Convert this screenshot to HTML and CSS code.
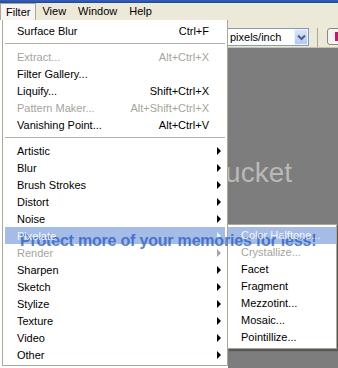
FILE: index.html
```html
<!DOCTYPE html>
<html lang="en">
<head>
    <meta charset="UTF-8">
    <title>Filter menu</title>
    <link rel="stylesheet" href="styles.css">
</head>
<body>

    <div class="janela">
        <div class="titulo"></div>

        <div class="barra">
            <span class="aberto">Filter</span>
            <span>View</span>
            <span>Window</span>
            <span>Help</span>
        </div>

        <div class="area">
            <div class="menu">
                <div class="item"><span>Surface Blur</span><span>Ctrl+F</span><span></span></div>
                <div class="sep"></div>
                <div class="item off"><span>Extract...</span><span>Alt+Ctrl+X</span><span></span></div>
                <div class="item"><span>Filter Gallery...</span><span></span><span></span></div>
                <div class="item"><span>Liquify...</span><span>Shift+Ctrl+X</span><span></span></div>
                <div class="item off"><span>Pattern Maker...</span><span>Alt+Shift+Ctrl+X</span><span></span></div>
                <div class="item"><span>Vanishing Point...</span><span>Alt+Ctrl+V</span><span></span></div>
                <div class="sep"></div>
                <div class="item"><span>Artistic</span><span></span><span class="seta"></span></div>
                <div class="item"><span>Blur</span><span></span><span class="seta"></span></div>
                <div class="item"><span>Brush Strokes</span><span></span><span class="seta"></span></div>
                <div class="item"><span>Distort</span><span></span><span class="seta"></span></div>
                <div class="item"><span>Noise</span><span></span><span class="seta"></span></div>
                <div class="item ativo"><span class="rotulo">Pixelate</span><span></span><span class="seta"></span></div>
                <div class="item off"><span>Render</span><span></span><span class="seta"></span></div>
                <div class="item"><span>Sharpen</span><span></span><span class="seta"></span></div>
                <div class="item"><span>Sketch</span><span></span><span class="seta"></span></div>
                <div class="item"><span>Stylize</span><span></span><span class="seta"></span></div>
                <div class="item"><span>Texture</span><span></span><span class="seta"></span></div>
                <div class="item"><span>Video</span><span></span><span class="seta"></span></div>
                <div class="item"><span>Other</span><span></span><span class="seta"></span></div>
            </div>

            <div class="lado">
                <div class="ferramentas">
                    <div class="combo">
                        <span>pixels/inch</span>
                        <span class="abrir">
                            <svg width="9" height="7" viewBox="0 0 9 7"><path d="M1 1.5 L4.5 5 L8 1.5" fill="none" stroke="#4d6185" stroke-width="2"/></svg>
                        </span>
                    </div>
                    <div class="divisor"></div>
                    <div class="botao"></div>
                </div>
                <div class="tela">
                    <div class="marca">photobucket</div>
                </div>
            </div>
        </div>

        <div class="sub">
            <div class="item ativo"><span class="rotulo">Color Halftone...</span></div>
            <div class="item off">Crystallize...</div>
            <div class="item">Facet</div>
            <div class="item">Fragment</div>
            <div class="item">Mezzotint...</div>
            <div class="item">Mosaic...</div>
            <div class="item">Pointillize...</div>
        </div>

        <div class="aviso">Protect more of your memories for less!</div>
    </div>

</body>
</html>
```

FILE: styles.css
```css
* {
    margin: 0;
    padding: 0;
    box-sizing: border-box;
}

body {
    font-family: "Liberation Sans", Arial, sans-serif;
    font-size: 11px;
    color: #000;
    background: #fff;
}

.janela {
    position: relative;
    width: 338px;
    height: 368px;
    overflow: hidden;
    display: flex;
    flex-direction: column;
}

.titulo {
    height: 3px;
    background: linear-gradient(#3a62b8, #1d47a6);
}

.barra {
    height: 17px;
    background: #ece9d8;
    display: flex;
}

.barra span {
    padding: 0 6px;
    line-height: 17px;
}

.barra .aberto {
    background: #f6f5f0;
    border: 1px solid #aca899;
    border-bottom: none;
    padding: 0 5px;
    line-height: 16px;
}

.area {
    flex: 1;
    display: flex;
    background: #fff;
}

.menu {
    flex-shrink: 0;
    width: 226px;
    margin-left: 2px;
    align-self: flex-start;
    border: 1px solid #aca899;
    border-top: none;
    padding: 2px 0 2px;
    background: #fff;
}

.item {
    display: grid;
    grid-template-columns: 1fr auto 16px;
    align-items: center;
    height: 17px;
    margin: 0 2px;
    padding-left: 12px;
    white-space: nowrap;
}

.sep {
    height: 9px;
    margin: 0 2px;
    display: flex;
    align-items: center;
}

.sep::after {
    content: "";
    flex: 1;
    border-top: 1px solid #b4b1a4;
}

.off {
    color: #a6a49c;
}

.ativo {
    background: #a4bce6;
    color: #f4f7fc;
}

/* the highlighted labels stay readable over the watermark */
.rotulo {
    position: relative;
    z-index: 2;
}

.seta {
    width: 0;
    height: 0;
    margin-left: 8px;
    border-left: 4px solid #000;
    border-top: 4px solid transparent;
    border-bottom: 4px solid transparent;
}

.off .seta {
    border-left-color: #a6a49c;
}

.ativo .seta {
    border-left-color: #eef2fa;
}

.lado {
    flex: 1;
    min-width: 0;
    overflow: hidden;
    display: flex;
    flex-direction: column;
}

.ferramentas {
    height: 28px;
    background: #ece9d8;
    border-bottom: 1px solid #c5c2b2;
    display: flex;
    align-items: flex-start;
    padding-top: 8px;
}

.combo {
    flex-shrink: 0;
    width: 81px;
    height: 18px;
    background: #fff;
    border: 1px solid #7f9db9;
    border-left: none;
    display: flex;
    align-items: center;
    justify-content: space-between;
    padding-left: 2px;
}

.abrir {
    width: 14px;
    height: 16px;
    background: linear-gradient(#dbe5fb, #b3c8f3);
    border: 1px solid #eef3fd;
    display: flex;
    align-items: center;
    justify-content: center;
}

.divisor {
    flex-shrink: 0;
    width: 1px;
    height: 19px;
    margin-left: 8px;
    background: #aca899;
}

.botao {
    flex-shrink: 0;
    position: relative;
    width: 16px;
    height: 17px;
    margin-left: 9px;
    border: 1px solid #8a8a8a;
    border-radius: 3px;
    background: #f4f3ee;
}

.botao::after {
    content: "";
    position: absolute;
    left: 7px;
    top: 3px;
    width: 4px;
    height: 9px;
    background: #c0186a;
}

.tela {
    flex: 1;
    position: relative;
    overflow: hidden;
    background: #7d7d7d;
}

.marca {
    position: absolute;
    right: 46px;
    top: 111px;
    font-size: 28px;
    line-height: 28px;
    color: #b9b9b9;
    white-space: nowrap;
}

.sub {
    position: absolute;
    left: 227px;
    top: 224px;
    width: 110px;
    border: 1px solid #aca899;
    padding: 2px 0;
    background: #fff;
    box-shadow: 2px 2px 1px rgba(0, 0, 0, 0.3);
}

.sub .item {
    display: block;
    line-height: 17px;
    margin: 0;
    padding-left: 13px;
}

.aviso {
    position: absolute;
    left: 20px;
    top: 232px;
    font-size: 16px;
    font-weight: bold;
    line-height: 17px;
    letter-spacing: -0.2px;
    color: rgba(45, 95, 195, 0.8);
    white-space: nowrap;
}
```
